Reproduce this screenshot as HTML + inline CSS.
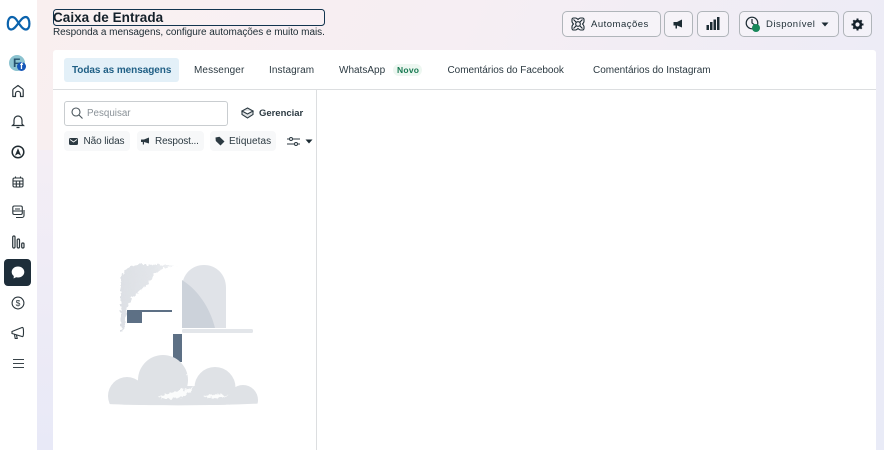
<!DOCTYPE html>
<html lang="pt"><head><meta charset="utf-8"><title>Caixa de Entrada</title>
<style>
*{box-sizing:border-box}
html,body{margin:0;padding:0}
body{width:884px;height:450px;overflow:hidden;position:relative;font-family:"Liberation Sans",sans-serif;color:#1c2b33;background:#f0edf6}
.t{position:absolute;white-space:nowrap;line-height:14px;font-size:10px;color:#2c3a42}
.a{position:absolute}
.btn{position:absolute;top:11px;height:26px;border:1px solid #b0b5ba;border-radius:5px;background:rgba(255,255,255,.35)}
.chip{position:absolute;top:131px;height:20px;background:#f7f8f9;border-radius:4px}
svg{position:absolute;overflow:visible}
</style></head><body>
<div class="a" style="left:37px;top:0;width:847px;height:450px;background:linear-gradient(115deg,#f9efef 0%,#f6eef3 40%,#e9ebf7 100%)"></div>
<div class="a" style="left:37px;top:150px;width:16px;height:300px;background:linear-gradient(180deg,#f4eef5,#e8e9f7)"></div>
<div class="a" style="left:0;top:0;width:37px;height:450px;background:#fff"></div>

<!-- meta logo -->
<svg style="left:6px;top:15px" width="25" height="17" viewBox="0 0 25 17"><path d="M12.500 8C10.200 4 8.600 2 6 2 3.300 2 1.800 5 1.800 9.200c0 3.300 1.300 5.300 3.500 5.300 2.600 0 4.400-2.900 7.200-6.500 2.800-3.600 4.600-6 7.200-6 2.400 0 3.700 3 3.700 6.800 0 3.400-1.200 5.700-3.600 5.700-2.700 0-4.500-2.800-7.300-6.500z" fill="none" stroke="#0b63ad" stroke-width="2.200"/></svg>

<!-- avatar -->
<div class="a" style="left:9px;top:55px;width:16px;height:16px;border-radius:50%;background:#8cc3d0"></div>
<div class="t" style="left:13px;top:56px;font-size:12px;font-weight:bold;color:#25516b">F</div>
<div class="a" style="left:17px;top:62px;width:9px;height:9px;border-radius:50%;background:#1657b8"></div>
<div class="t" style="left:20px;top:61px;font-size:9px;line-height:11px;font-weight:bold;color:#fff">f</div>

<!-- home -->
<svg style="left:11px;top:84px" width="14" height="14" viewBox="0 0 14 14" fill="none" stroke="#2a353b" stroke-width="1.200"><path d="M1.800 12.500V6.200C1.800 5.600 2 5.200 2.500 4.800L7 1.500l4.500 3.300c.5.400.7.800.7 1.400v6.300H9.500V9.800a2.500 2.500 0 0 0-5 0v2.700z" stroke-linejoin="round"/></svg>
<!-- bell -->
<svg style="left:11px;top:114px" width="14" height="15" viewBox="0 0 14 15" fill="none" stroke="#2a353b" stroke-width="1.200"><path d="M3 10V6a4 4 0 0 1 8 0v4l1.500 1.500h-11zM5.500 13.500h3"/></svg>
<!-- A circle -->
<svg style="left:11px;top:145px" width="14" height="14" viewBox="0 0 14 14" fill="none" stroke="#1f2a30" stroke-width="1.500"><circle cx="7" cy="7" r="5.800"/><path d="M4.500 10L7 4l2.500 6-2.500-1.500z" fill="#1f2a30" stroke-width=".6"/></svg>
<!-- calendar -->
<svg style="left:12px;top:176px" width="12" height="12" viewBox="0 0 12 12" fill="none" stroke="#2a353b" stroke-width="1.100"><rect x="1" y="2" width="10" height="9" rx="1.500"/><path d="M1 5h10M4.300 5v6M7.700 5v6M1 8h10M3.500 .5v2M8.500 .5v2"/></svg>
<!-- pages -->
<svg style="left:12px;top:205px" width="13" height="14" viewBox="0 0 13 14" fill="none" stroke="#2a353b" stroke-width="1.100"><rect x=".8" y="1" width="9.500" height="8.500" rx="1.500"/><path d="M3 4h5M1 6h9M12 5v5.500A2 2 0 0 1 10 12.500H4"/></svg>
<!-- chart -->
<svg style="left:12px;top:235px" width="13" height="14" viewBox="0 0 13 14" fill="none" stroke="#2a353b" stroke-width="1.200"><rect x=".7" y="1" width="2.300" height="12" rx="1.100"/><rect x="5.200" y="4" width="2.300" height="9" rx="1.100"/><rect x="9.700" y="8" width="2.300" height="5" rx="1.100"/></svg>
<!-- active chat -->
<div class="a" style="left:4px;top:259px;width:27px;height:27px;border-radius:4px;background:#1e2e3a"></div>
<svg style="left:11px;top:266px" width="14" height="13" viewBox="0 0 14 13"><path d="M7 .5c3.500 0 6.300 2.400 6.300 5.500S10.500 11.500 7 11.500c-.7 0-1.300-.1-1.900-.2L2.600 12.500l.2-2.500C1.400 9 .7 7.600.7 6 .7 2.900 3.500.5 7 .5z" fill="#fff"/></svg>
<!-- dollar -->
<svg style="left:11px;top:296px" width="14" height="14" viewBox="0 0 14 14" fill="none" stroke="#2a353b" stroke-width="1.100"><circle cx="7" cy="7" r="5.900"/><text x="7" y="10" font-size="8.500" text-anchor="middle" fill="#2a353b" stroke="none" font-family="Liberation Sans">$</text></svg>
<!-- megaphone -->
<svg style="left:11px;top:326px" width="14" height="14" viewBox="0 0 14 14" fill="none" stroke="#2a353b" stroke-width="1.100"><path d="M1 5.500L11 1.500c1-.3 1.500.5 1.500 4.500s-.5 5-1.500 4.500L1 7.500zM3.500 8.500l.7 4h2L5.500 9"/></svg>
<!-- menu -->
<div class="a" style="left:12.500px;top:359px;width:11px;height:1.300px;background:#3a444a"></div>
<div class="a" style="left:12.500px;top:363px;width:11px;height:1.300px;background:#3a444a"></div>
<div class="a" style="left:12.500px;top:367px;width:11px;height:1.300px;background:#3a444a"></div>

<!-- header -->
<div class="a" style="left:53px;top:9px;width:272px;height:17px;border:1.500px solid #12344f;border-radius:3.500px;background:rgba(255,255,255,.15)"></div>
<div class="t" style="left:53px;top:10px;font-size:13.500px;font-weight:bold;color:#14202a;line-height:15px;letter-spacing:.04px">Caixa de Entrada</div>
<div class="t" style="left:53px;top:26px;font-size:10px;color:#1c2b33;letter-spacing:-.05px">Responda a mensagens, configure automações e muito mais.</div>

<!-- top buttons -->
<div class="btn" style="left:562px;width:99px"></div>
<svg style="left:571px;top:17px" width="14" height="14" viewBox="0 0 14 14" fill="none" stroke="#1c2b33" stroke-width="1.100"><path d="M2.500 1h2c1 0 1.800.8 2.500 1.500C7.700 1.800 8.500 1 9.500 1h2c.8 0 1.500.7 1.500 1.500v2c0 1-.8 1.800-1.500 2.500.7.700 1.500 1.500 1.500 2.500v2c0 .8-.7 1.500-1.500 1.500h-2c-1 0-1.800-.8-2.500-1.500-.7.700-1.500 1.500-2.500 1.500h-2C1.700 13 1 12.300 1 11.500v-2C1 8.500 1.800 7.700 2.500 7 1.800 6.300 1 5.500 1 4.500v-2C1 1.700 1.700 1 2.500 1z"/><circle cx="7" cy="7" r="2.300"/><path d="M2.500 2.500l2.800 2.800M11.500 2.500L8.700 5.300M2.500 11.500l2.800-2.800M11.500 11.500L8.700 8.700"/></svg>
<div class="t" style="left:591px;top:17.500px;font-size:9.500px;letter-spacing:.5px;color:#1c2b33">Automações</div>
<div class="btn" style="left:664px;width:29px"></div>
<svg style="left:673px;top:19px" width="11" height="10" viewBox="0 0 11 10"><path d="M.5 3h3.500L9 .5v8L4 6.500v3H2.500v-3H.5z" fill="#1c2b33"/></svg>
<div class="btn" style="left:697px;width:32px"></div>
<svg style="left:706px;top:17px" width="14" height="13" viewBox="0 0 14 13" fill="#1c2b33"><rect x=".5" y="8" width="2.500" height="5"/><rect x="4" y="5" width="2.500" height="8"/><rect x="7.500" y="2.500" width="2.500" height="10.500"/><rect x="11" y="0" width="2.500" height="13"/></svg>
<div class="btn" style="left:739px;width:100px"></div>
<svg style="left:745px;top:16px" width="16" height="16" viewBox="0 0 16 16" fill="none" stroke="#1c2b33" stroke-width="1.200"><circle cx="7" cy="7" r="5.800"/><path d="M7 3v4l2.500 1.800"/></svg>
<div class="a" style="left:752px;top:24px;width:8px;height:8px;border-radius:50%;background:#18875a"></div>
<div class="t" style="left:766px;top:17.500px;font-size:9.500px;letter-spacing:.5px;color:#1c2b33">Disponível</div>
<svg style="left:821px;top:22px" width="8" height="5" viewBox="0 0 8 5"><path d="M.5.500h7L4 4.500z" fill="#1c2b33"/></svg>
<div class="btn" style="left:843px;width:29px"></div>
<svg style="left:851px;top:18px" width="13" height="13" viewBox="0 0 13 13"><circle cx="6.500" cy="6.500" r="3.400" fill="none" stroke="#14202a" stroke-width="2.600"/><path d="M6.500 .5v2M6.500 10.500v2M.5 6.500h2M10.500 6.500h2M2.300 2.300l1.400 1.400M9.300 9.300l1.400 1.400M2.300 10.700l1.400-1.400M9.300 3.700l1.400-1.400" stroke="#14202a" stroke-width="2"/></svg>

<!-- panel -->
<div class="a" style="left:53px;top:50px;width:823px;height:400px;background:#fff;border-radius:3px 3px 0 0"></div>
<div class="a" style="left:53px;top:89px;width:823px;height:1px;background:#dcdee0"></div>
<div class="a" style="left:316px;top:90px;width:1px;height:360px;background:#dcdee0"></div>

<!-- tabs -->
<div class="a" style="left:64px;top:58px;width:115px;height:24px;background:#e3f0f8;border-radius:3px"></div>
<div class="t" style="left:72px;top:64px;font-weight:bold;color:#1f5f85;letter-spacing:-.06px">Todas as mensagens</div>
<div class="t" style="left:194px;top:64px;letter-spacing:.1px">Messenger</div>
<div class="t" style="left:269px;top:64px;letter-spacing:.08px">Instagram</div>
<div class="t" style="left:339px;top:64px;letter-spacing:0">WhatsApp</div>
<div class="a" style="left:393px;top:64px;width:29px;height:12px;background:#edf7f1;border-radius:6px"></div>
<div class="t" style="left:397px;top:63px;font-size:8.500px;font-weight:bold;color:#187a52;letter-spacing:.25px">Novo</div>
<div class="t" style="left:447.500px;top:64px;letter-spacing:-.04px">Comentários do Facebook</div>
<div class="t" style="left:593px;top:64px;letter-spacing:-.01px">Comentários do Instagram</div>

<!-- search -->
<div class="a" style="left:64px;top:101px;width:164px;height:25px;border:1px solid #c9cdd0;border-radius:3px;background:#fff"></div>
<svg style="left:71px;top:107px" width="12" height="12" viewBox="0 0 12 12" fill="none" stroke="#4a555c" stroke-width="1.100"><circle cx="5" cy="5" r="4"/><path d="M8 8l3.500 3.500"/></svg>
<div class="t" style="left:87px;top:106.500px;color:#8a9298;font-size:9.800px;letter-spacing:0">Pesquisar</div>
<svg style="left:241px;top:107px" width="13" height="12" viewBox="0 0 13 12" fill="none" stroke="#2c3a42" stroke-width="1.100"><path d="M6.500 1L12 4 6.500 7 1 4zM1 4v3.500l5.500 3.500 5.500-3.500V4" fill="#dfe2e4"/></svg>
<div class="t" style="left:259px;top:106.500px;font-weight:bold;font-size:9.500px;letter-spacing:-.02px">Gerenciar</div>

<!-- chips -->
<div class="chip" style="left:64px;width:66px"></div>
<svg style="left:69px;top:138px" width="9" height="7" viewBox="0 0 9 7"><rect x="0" y="0" width="9" height="7" rx="1.500" fill="#2c3a42"/><path d="M1 1.500l3.500 2.500L8 1.500" stroke="#fff" fill="none" stroke-width=".8"/></svg>
<div class="t" style="left:83.500px;top:134.500px;letter-spacing:-.08px">Não lidas</div>
<div class="chip" style="left:137px;width:67px"></div>
<svg style="left:141px;top:137px" width="9" height="8" viewBox="0 0 9 8"><path d="M0 2.500h3L8 .5v6L3 5v2.500H1.800V5H0z" fill="#2c3a42"/></svg>
<div class="t" style="left:155px;top:134.500px;letter-spacing:-.12px">Respost...</div>
<div class="chip" style="left:210px;width:66px"></div>
<svg style="left:215px;top:136px" width="10" height="10" viewBox="0 0 10 10"><path d="M.5 1.500L4.500.8 9.500 5.500 5.500 9.500.8 5z" fill="#2c3a42"/></svg>
<div class="t" style="left:229px;top:134.500px;letter-spacing:.05px">Etiquetas</div>
<svg style="left:287px;top:136px" width="13" height="11" viewBox="0 0 13 11" fill="none" stroke="#2c3a42" stroke-width="1"><path d="M0 3h13M0 8h13"/><circle cx="4" cy="3" r="1.500" fill="#fff"/><circle cx="9" cy="8" r="1.500" fill="#fff"/></svg>
<svg style="left:305px;top:139px" width="8" height="5" viewBox="0 0 8 5"><path d="M.5.500h7L4 4.500z" fill="#1c2b33"/></svg>

<!-- illustration -->
<svg style="left:90px;top:250px;filter:blur(.35px)" width="190" height="170" viewBox="0 0 190 170">
<defs>
<linearGradient id="g1" x1="0" y1="0" x2="1" y2="0"><stop offset="0" stop-color="#dde0e5"/><stop offset=".6" stop-color="#e3e6ea"/><stop offset="1" stop-color="#f2f3f5"/></linearGradient>
<filter id="rough" x="-5%" y="-5%" width="110%" height="110%"><feTurbulence type="fractalNoise" baseFrequency=".3" numOctaves="2" seed="4"/><feDisplacementMap in="SourceGraphic" scale="6" xChannelSelector="R" yChannelSelector="G"/></filter>
<clipPath id="cl"><path d="M0 0H190V152C150 156 60 156 18 154 10 150 10 140 18 130z"/></clipPath>
</defs>
<g filter="url(#rough)">
<path d="M31 82V30C31 21 39 15 50 15H87C75 17 66 20 62 28 58 36 50 40 44 46 38 52 36 62 33 82z" fill="url(#g1)"/>
</g>
<path d="M92 78V38C92 24 102 15 114 15S136 24 136 38V78z" fill="#e0e3e8"/>
<path d="M92 30C108 40 120 58 125 78H92z" fill="#ccd2da"/>
<rect x="92" y="79" width="71" height="4" rx="1.500" fill="#e3e6ea"/>
<path d="M37 60H82V62H52V73H37z" fill="#5d7085"/>
<rect x="83" y="84" width="9" height="28" fill="#5d7085"/>
<g clip-path="url(#cl)" fill="#dfe2e6">
<circle cx="37" cy="146" r="19"/>
<circle cx="73" cy="130" r="25"/>
<circle cx="125" cy="137.500" r="20.500"/>
<circle cx="153" cy="150" r="15"/>
<rect x="30" y="136" width="110" height="20"/>
</g>
<g fill="#fff" filter="url(#rough)" opacity=".9">
<path d="M68 147c8-5 16-3 24-8 4 1 8 0 12-3-3 7-8 10-16 12-8 2-15 1-20-1z"/>
<path d="M114 146c8-3 16-2 24 0-7 3-16 3-24 0z"/>
<path d="M96 124c4 2 7 2 10 0-1 4-7 6-10 0z"/>
</g>
</svg>
</body></html>
